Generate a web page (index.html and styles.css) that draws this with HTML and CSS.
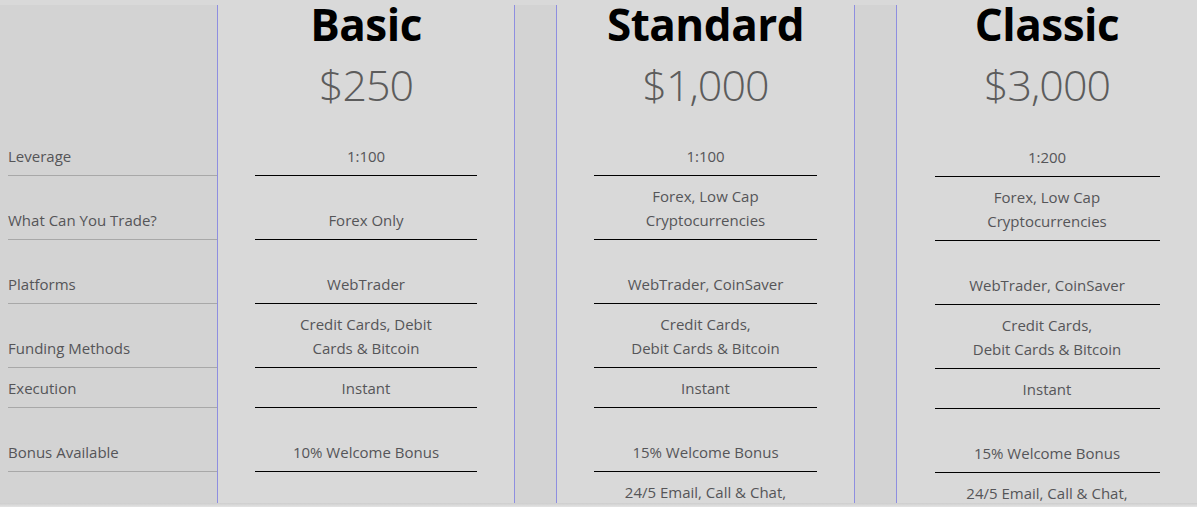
FILE: index.html
```html
<!DOCTYPE html>
<html lang="en">
<head>
<meta charset="utf-8">
<title>Account Types</title>
<link rel="stylesheet" href="styles.css">
</head>
<body>
<div class="compare">
  <div class="labels">
    <div class="head"></div>
    <div class="lrow one">Leverage</div>
    <div class="lrow two">What Can You Trade?</div>
    <div class="lrow two">Platforms</div>
    <div class="lrow two">Funding Methods</div>
    <div class="lrow one">Execution</div>
    <div class="lrow two">Bonus Available</div>
    <div class="lrow three">Support</div>
  </div>

  <div class="plan plan-basic">
    <div class="head">
      <h2 class="name">Basic</h2>
      <div class="price">$250</div>
    </div>
    <div class="prow one">1:100</div>
    <div class="prow two">Forex Only</div>
    <div class="prow two">WebTrader</div>
    <div class="prow two">Credit Cards, Debit<br>Cards &amp; Bitcoin</div>
    <div class="prow one">Instant</div>
    <div class="prow two">10% Welcome Bonus</div>
    <div class="prow three">24/5 Email Support</div>
  </div>

  <div class="gap"></div>

  <div class="plan plan-standard">
    <div class="head">
      <h2 class="name">Standard</h2>
      <div class="price">$1,000</div>
    </div>
    <div class="prow one">1:100</div>
    <div class="prow two">Forex, Low Cap<br>Cryptocurrencies</div>
    <div class="prow two">WebTrader, CoinSaver</div>
    <div class="prow two">Credit Cards,<br>Debit Cards &amp; Bitcoin</div>
    <div class="prow one">Instant</div>
    <div class="prow two">15% Welcome Bonus</div>
    <div class="prow three">24/5 Email, Call &amp; Chat,<br>Personal Account<br>Manager</div>
  </div>

  <div class="gap"></div>

  <div class="plan plan-classic">
    <div class="head">
      <h2 class="name">Classic</h2>
      <div class="price">$3,000</div>
    </div>
    <div class="prow one">1:200</div>
    <div class="prow two">Forex, Low Cap<br>Cryptocurrencies</div>
    <div class="prow two">WebTrader, CoinSaver</div>
    <div class="prow two">Credit Cards,<br>Debit Cards &amp; Bitcoin</div>
    <div class="prow one">Instant</div>
    <div class="prow two">15% Welcome Bonus</div>
    <div class="prow three">24/5 Email, Call &amp; Chat,<br>Personal Account<br>Manager</div>
  </div>
</div>
<div class="bottom-shade"></div>
</body>
</html>
```

FILE: styles.css
```css
html, body {
  margin: 0;
  padding: 0;
}
body {
  background: #d9d9d9;
  font-family: "Open Sans", "Noto Sans", "Liberation Sans", sans-serif;
  font-size: 15px;
  line-height: 24px;
  color: #555558;
  overflow: hidden;
  width: 1197px;
  height: 507px;
}
.compare {
  display: flex;
  margin-top: 5px;
  width: 1400px;
  align-items: stretch;
}
.labels {
  flex: none;
  width: 217px;
  background: #d3d3d3;
}
.gap {
  flex: none;
  width: 41px;
  background: #d3d3d3;
}
.plan {
  flex: none;
  background: #d9d9d9;
  border-left: 1px solid #8e8ee0;
  border-right: 1px solid #8e8ee0;
}
.plan-basic { width: 296px; }
.plan-standard { width: 297px; }
.plan-classic { width: 300px; }
.plan-classic .head { height: 132px; }

.head {
  display: flow-root;
  height: 131px;
  box-sizing: border-box;
  text-align: center;
}
.name {
  margin: -5px 0 0;
  font-size: 44px;
  line-height: 48px;
  font-weight: 700;
  letter-spacing: -0.5px;
  color: #000;
}
.price {
  margin-top: 13px;
  font-size: 43px;
  line-height: 48px;
  font-weight: 300;
  letter-spacing: -1px;
  color: #5c5c5c;
}

.lrow, .prow {
  box-sizing: border-box;
  display: flex;
  flex-direction: column;
  justify-content: flex-end;
  padding: 8px 0 7px;
}
.one { height: 40px; }
.two { height: 64px; }
.three { height: 88px; }

.lrow {
  margin-left: 8px;
  border-bottom: 1px solid #a8a8a8;
}
.prow {
  width: 75%;
  margin: 0 auto;
  text-align: center;
  border-bottom: 1px solid #000;
}

.bottom-shade {
  position: fixed;
  left: 0;
  right: 0;
  bottom: 0;
  height: 4px;
  background: linear-gradient(#cdcdcd, #e4e4e4);
}
```
